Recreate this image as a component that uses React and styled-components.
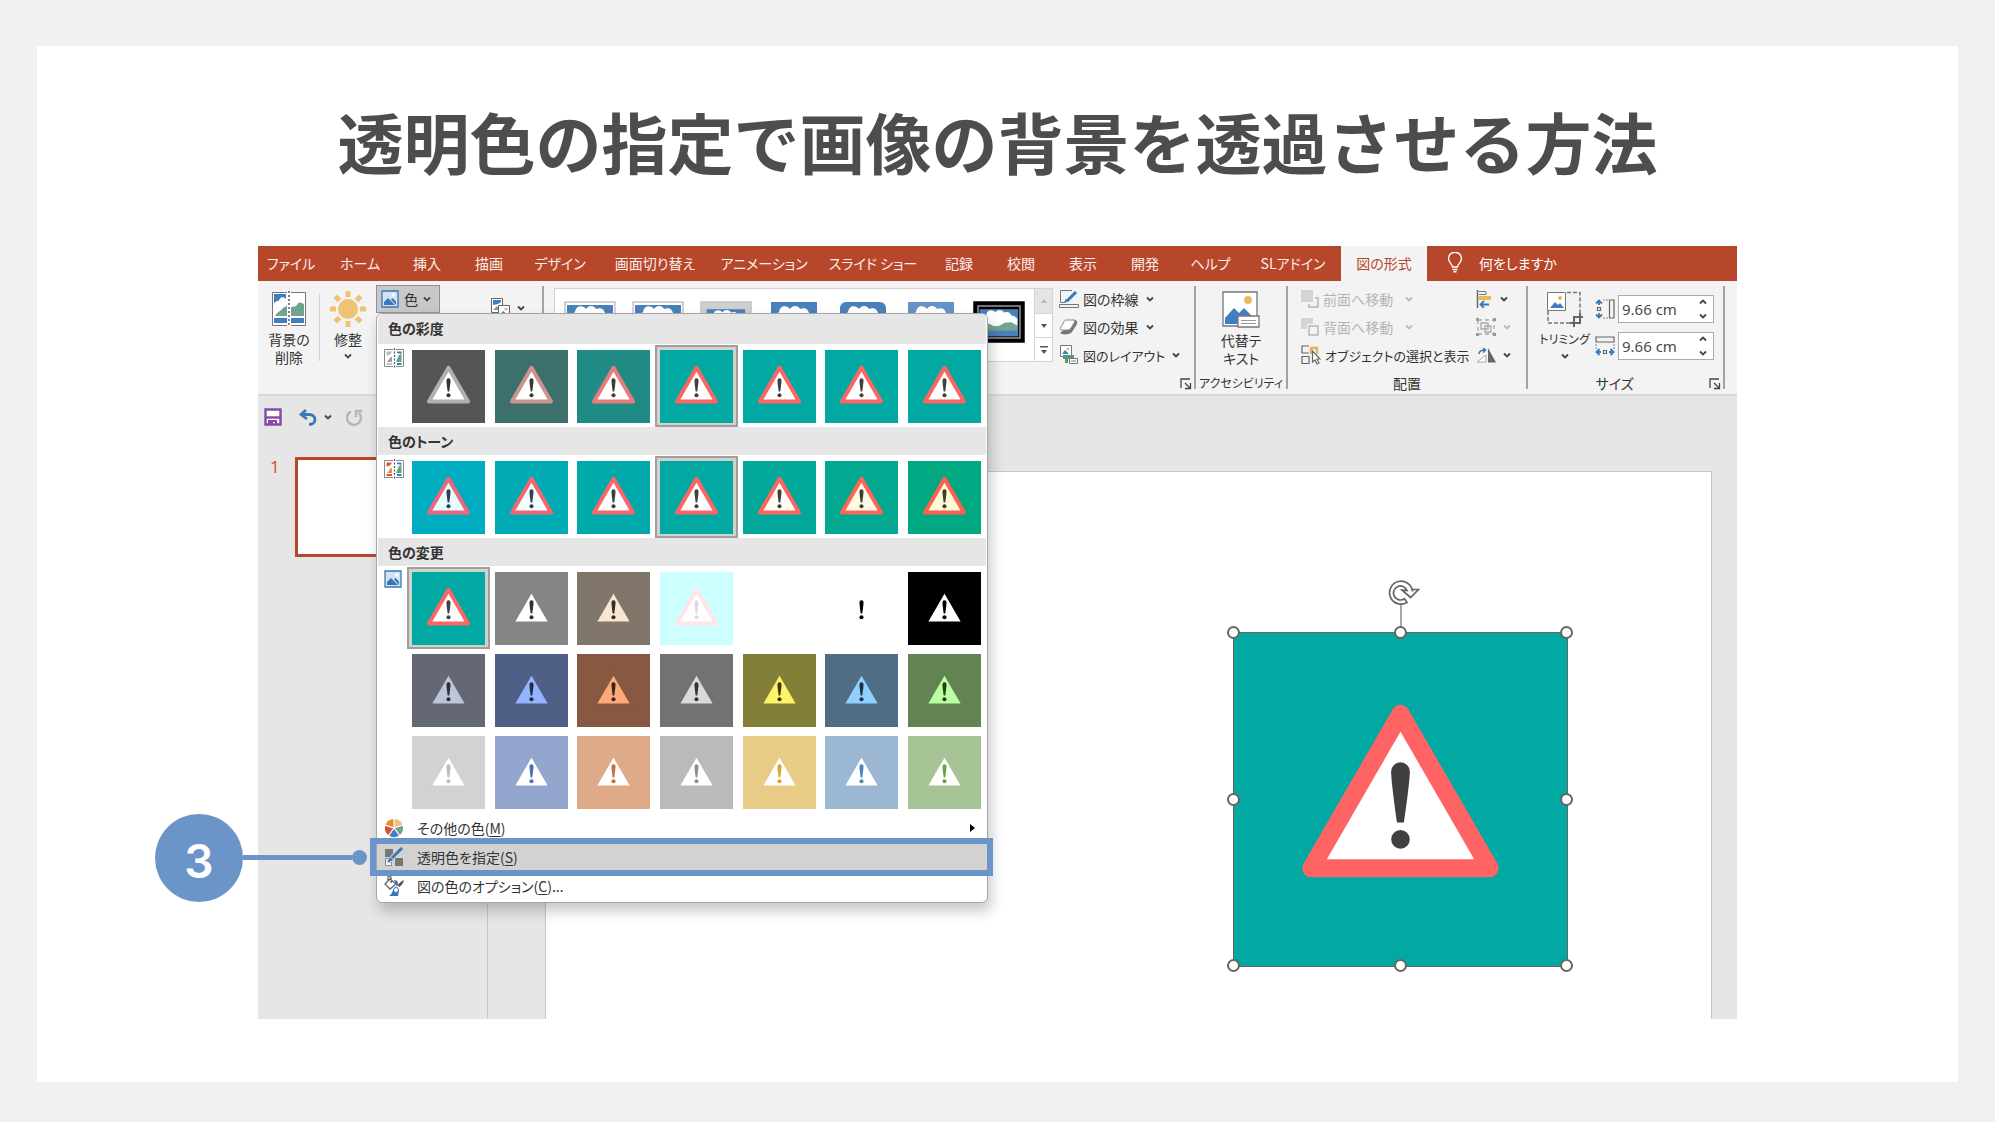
import styled, { createGlobalStyle } from 'styled-components';

const GlobalStyle = createGlobalStyle`
    * {
        box-sizing: border-box;
    }
    body {
        margin: 0;
        background-color: #f1f1f1;
        font-family: "Noto Sans CJK JP", "Noto Sans", sans-serif;
        font-feature-settings: "palt";
        color: #333;
    }
    button, input {
        font: inherit;
        font-feature-settings: inherit;
        color: inherit;
        border: 0;
        margin: 0;
        padding: 0;
        background: none;
    }
    button {
        cursor: pointer;
        white-space: nowrap;
    }
    svg {
        display: block;
        flex: none;
    }
`

const Page = styled.div`
    padding: 46px 37px 40px;
    min-height: 100vh;
`

const Card = styled.main`
    background-color: #fff;
    padding: 46px 221px 63px;
`

const Title = styled.h1`
    margin: 0 0 58px;
    font-size: 66px;
    line-height: 96px;
    font-weight: 700;
    color: #4d4d4d;
    text-align: center;
    white-space: nowrap;
    font-feature-settings: normal;
`

const Window = styled.section`
    position: relative;
    background-color: #e6e6e6;
    font-size: 14px;
`

const TabBar = styled.nav`
    display: flex;
    height: 35px;
    background-color: #b7472a;
    color: #fff;
`

const Tab = styled.button`
    width: ${(props) => props.$width}px;
    padding-bottom: 2px;
    background-color: ${(props) => (props.$active ? '#f3f3f3' : 'transparent')};
    color: ${(props) => (props.$active ? '#b7472a' : '#fbeeea')};
`

const TellMe = styled.button`
    display: flex;
    align-items: center;
    gap: 16px;
    padding: 0 0 2px 20px;
`

const Ribbon = styled.div`
    display: flex;
    height: 115px;
    background-color: #f3f3f3;
    border-bottom: 2px solid #d9d9d9;
`

const Divider = styled.span`
    flex: none;
    width: 2px;
    margin: 5px 0;
    background-color: #a3a3a3;
`

const ThinDivider = styled.span`
    width: 1px;
    height: 68px;
    margin-top: 12px;
    background-color: #d2d2d2;
`

const Group = styled.div`
    display: flex;
    flex-direction: column;
    flex: ${(props) => (props.$width ? `0 0 ${props.$width}px` : '1 1 0')};
    min-width: 0;
`

const GroupBody = styled.div`
    display: flex;
    flex: 1;
    align-items: flex-start;
    padding-left: ${(props) => props.$left || 0}px;
`

const GroupFooter = styled.div`
    position: relative;
    height: 20px;
    padding-right: ${(props) => props.$right || 0}px;
    line-height: 18px;
    font-size: ${(props) => (props.$small ? 12 : 14)}px;
    text-align: center;
    white-space: nowrap;
`

const Launcher = styled.button`
    position: absolute;
    right: 2px;
    top: 4px;
`

const BigButton = styled.button`
    display: flex;
    flex-direction: column;
    align-items: center;
    width: ${(props) => props.$width}px;
    padding-top: 10px;
    line-height: 18px;
    font-size: ${(props) => (props.$small ? 12 : 14)}px;
    svg:first-child {
        margin-bottom: 3px;
    }
`

const ChevronSlot = styled.span`
    display: flex;
    align-items: center;
    height: 18px;
`

const ColorButton = styled.button`
    display: flex;
    align-items: center;
    gap: 5px;
    width: 64px;
    height: 28px;
    margin: 4px 50px 0 0;
    padding-left: 4px;
    background-color: #c8c8c8;
    border: 1px solid #919191;
`

const ResetButton = styled.button`
    display: flex;
    align-items: center;
    gap: 6px;
    margin-top: 16px;
`

const SmallColumn = styled.div`
    display: flex;
    flex-direction: column;
    padding-top: 4px;
    width: ${(props) => props.$width}px;
`

const SmallButton = styled.button`
    display: flex;
    align-items: center;
    gap: 4px;
    height: 28px;
    font-size: ${(props) => (props.$small ? 13 : 14)}px;
    color: ${(props) => (props.disabled ? '#b5b3b5' : '#333')};
    svg:last-child:not(:first-child) {
        margin-left: ${(props) => props.$gap || 3}px;
    }
`

const Gallery = styled.div`
    display: flex;
    flex: 1;
    height: 74px;
    margin: 7px 6px 0 10px;
    background-color: #fff;
    border: 1px solid #d4d4d4;
`

const GalleryItems = styled.div`
    display: grid;
    grid-template-columns: repeat(7, 1fr);
    flex: 1;
    justify-items: center;
    padding: 12px 1px 0;
`

const GalleryScroll = styled.div`
    display: grid;
    grid-template-rows: repeat(3, 1fr);
    width: 18px;
    border-left: 1px solid #d4d4d4;
`

const ScrollButton = styled.button`
    display: flex;
    align-items: center;
    justify-content: center;
    background-color: ${(props) => (props.disabled ? '#e4e4e4' : '#fff')};
    & + & {
        border-top: 1px solid #d4d4d4;
    }
`

const SizeFields = styled.div`
    display: flex;
    flex-direction: column;
    gap: 9px;
    padding-top: 14px;
`

const SizeField = styled.label`
    display: flex;
    align-items: center;
    gap: 3px;
`

const Spinner = styled.span`
    display: flex;
    align-items: center;
    width: 96px;
    height: 28px;
    padding: 0 6px 0 3px;
    background-color: #fff;
    border: 1px solid #ababab;
`

const SizeInput = styled.input`
    flex: 1;
    min-width: 0;
    font-family: "Noto Sans", sans-serif;
    font-size: 15px;
    color: #4a4a4a;
    outline: none;
`

const SpinArrows = styled.span`
    display: flex;
    flex-direction: column;
    gap: 8px;
`

const QuickAccess = styled.div`
    display: flex;
    align-items: center;
    height: 42px;
    padding-left: 6px;
`

const QuickButton = styled.button`
    display: flex;
    align-items: center;
    gap: 7px;
    margin-right: ${(props) => props.$gap}px;
`

const Workspace = styled.div`
    display: flex;
    min-height: 581px;
`

const SlideList = styled.aside`
    display: flex;
    align-items: flex-start;
    flex: 0 0 230px;
    gap: 15px;
    padding: 19px 14px 0 12px;
    border-right: 1px solid #c6c6c6;
    font-family: "Noto Sans", sans-serif;
    font-size: 17px;
    line-height: 20px;
    color: #d35230;
`

const SlidePreview = styled.button`
    flex: 1;
    height: 100px;
    background-color: #fff;
    border: 3px solid #b7472a;
`

const Editor = styled.div`
    display: flex;
    flex: 1;
    padding: 33px 25px 0 57px;
`

const Slide = styled.div`
    position: relative;
    flex: 1;
    background-color: #fff;
    border: 1px solid #c6c6c6;
    border-bottom: 0;
`

const Picture = styled.div`
    position: absolute;
    top: 160px;
    right: 143px;
    width: 335px;
    height: 335px;
    border: 1px solid #666;
`

const Handle = styled.span`
    position: absolute;
    left: ${(props) => props.$x}%;
    top: ${(props) => props.$y}%;
    width: 13px;
    height: 13px;
    margin: -7px 0 0 -7px;
    background-color: #fff;
    border: 2px solid #666;
    border-radius: 50%;
`

const Rotator = styled.span`
    position: absolute;
    left: 50%;
    bottom: 100%;
    width: 32px;
    height: 54px;
    margin-left: -13px;
`

const Menu = styled.div`
    position: absolute;
    left: 118px;
    top: 67px;
    width: 612px;
    padding-bottom: 2px;
    background-color: #fff;
    border: 1px solid #a6a6a6;
    border-radius: 6px;
    box-shadow: 3px 8px 14px rgba(0, 0, 0, 0.22);
`

const MenuTitle = styled.h2`
    margin: 0 1px;
    padding-left: 10px;
    height: ${(props) => (props.$first ? 30 : 28)}px;
    line-height: 28px;
    font-size: 14px;
    font-weight: 700;
    background-color: #e6e6e6;
    border-radius: ${(props) => (props.$first ? '5px 5px 0 0' : 0)};
`

const MenuSection = styled.div`
    display: flex;
    padding: 1px 1px 0 7px;
`

const SectionIcon = styled.span`
    width: 23px;
    padding-top: 3px;
`

const SwatchGrid = styled.div`
    display: grid;
    grid-template-columns: repeat(7, 1fr);
    grid-auto-rows: 82px;
    flex: 1;
`

const Swatch = styled.button`
    display: flex;
    align-items: center;
    justify-content: center;
    background-color: ${(props) => (props.$selected ? '#d3d1ce' : 'transparent')};
    border: 2px solid ${(props) => (props.$selected ? '#a19f9d' : 'transparent')};
`

const MenuItem = styled.button`
    position: relative;
    z-index: ${(props) => (props.$active ? 1 : 0)};
    display: flex;
    align-items: center;
    width: 100%;
    height: 29px;
    padding: 0 12px 0 7px;
    background-color: ${(props) => (props.$active ? '#d2d2d2' : 'transparent')};
    text-align: left;
`

const MenuLabel = styled.span`
    flex: 1;
    padding-left: 13px;
    u {
        text-underline-offset: 2px;
    }
`

const Highlight = styled.span`
    position: absolute;
    top: -4px;
    bottom: -5px;
    left: -7px;
    right: -6px;
    border: 6px solid #6b95c9;
`

const Callout = styled.span`
    position: absolute;
    top: 50%;
    right: calc(100% + 10px);
    display: flex;
    align-items: center;
    width: 212px;
    height: 88px;
    margin-top: -43px;
`

const StepNumber = styled.span`
    display: flex;
    align-items: center;
    justify-content: center;
    width: 88px;
    height: 88px;
    padding-top: 6px;
    border-radius: 50%;
    background-color: #6b95c9;
    color: #fff;
    font-family: Inter, sans-serif;
    font-size: 46px;
    font-weight: 600;
`

const StepLine = styled.span`
    flex: 1;
    height: 5px;
    background-color: #6b95c9;
`

const StepDot = styled.span`
    width: 15px;
    height: 15px;
    border-radius: 50%;
    background-color: #6b95c9;
`

const tabs = [
    ['ファイル', 66],
    ['ホーム', 72],
    ['挿入', 62],
    ['描画', 62],
    ['デザイン', 80],
    ['画面切り替え', 110],
    ['アニメーション', 108],
    ['スライド ショー', 110],
    ['記録', 62],
    ['校閲', 62],
    ['表示', 62],
    ['開発', 62],
    ['ヘルプ', 69],
    ['SLアドイン', 96],
    ['図の形式', 86],
]

// background, border, inside, mark
const base = ['#02a9a2', '#ff6464', '#fff', '#404040']

const saturation = [
    ['#555', '#b0b0b0', '#fff', '#333'],
    ['#3c706d', '#cc9392', '#fff', '#383838'],
    ['#208b85', '#e67c7c', '#fff', '#3c3c3c'],
    base,
    base,
    base,
    base,
]

const tone = [
    ['#00adc0', '#ee657c', '#e6fdff', '#2c3d55'],
    ['#00abb4', '#f76472', '#f2feff', '#353f4e'],
    ['#00aaab', '#fb646b', '#fafeff', '#3c4048'],
    base,
    ['#02a89a', '#ff645f', '#fffdf5', '#40403a'],
    ['#02a88f', '#ff6456', '#fffce6', '#443f2c'],
    ['#02a882', '#ff604c', '#fffad8', '#443e20'],
]

const recolor = [
    base,
    ['#858585', '#858585', '#fff', '#333'],
    ['#80766a', '#80766a', '#f7e6d2', '#332c24'],
    ['#ccfffe', '#ffe5e5', '#fff', '#dcdcdc'],
    ['#fff', '#fff', '#fff', '#fff'],
    ['#fff', '#fff', '#fff', '#000'],
    ['#000', '#000', '#fff', '#000'],
    ['#646873', '#646873', '#bec5d8', '#2d2f35'],
    ['#505f85', '#505f85', '#96b3ff', '#242c44'],
    ['#865940', '#865940', '#ffa978', '#3a2518'],
    ['#727272', '#727272', '#dadada', '#333'],
    ['#847f38', '#847f38', '#fff168', '#383514'],
    ['#4f6e85', '#4f6e85', '#90d0ff', '#20323f'],
    ['#628453', '#628453', '#baffa0', '#283a20'],
    ['#d2d2d2', '#d2d2d2', '#fff', '#bcbcbc'],
    ['#92a6ce', '#92a6ce', '#fff', '#4a70b8'],
    ['#dfaa88', '#dfaa88', '#fff', '#c5703a'],
    ['#bababa', '#bababa', '#fff', '#909090'],
    ['#e8cc85', '#e8cc85', '#fff', '#d9a52c'],
    ['#9bb7d2', '#9bb7d2', '#fff', '#4a86bd'],
    ['#a6c495', '#a6c495', '#fff', '#70a04c'],
]

const handles = [[0, 0], [50, 0], [100, 0], [0, 50], [100, 50], [0, 100], [50, 100], [100, 100]]

function Warning({ size, colors }) {
    const [back, border, inside, mark] = colors
    return (
        <svg width={size} height={size} viewBox="0 0 334 334">
            <path fill={back} d="M0 0h334v334H0z" />
            <path fill={inside} stroke={border} strokeWidth="18" strokeLinejoin="round" d="M167 81 256.500 236H77.500z" />
            <path fill={mark} d="M157.600 139a9.400 9.400 0 0 1 18.800 0c0 8-3.400 34-5.900 51h-7c-2.500-17-5.900-43-5.900-51z" />
            <circle fill={mark} cx="167" cy="207" r="9.300" />
        </svg>
    )
}

function Chevron({ color = '#444', up }) {
    return (
        <svg width="8" height="6" viewBox="0 0 8 6" fill="none" stroke={color} strokeWidth="1.800">
            <path d={up ? 'M1 4.500 4 1.500 7 4.500' : 'M1 1.500 4 4.500 7 1.500'} />
        </svg>
    )
}

function LauncherIcon() {
    return (
        <svg width="12" height="12" viewBox="0 0 12 12" fill="none" stroke="#444" strokeWidth="1.300">
            <path d="M1 10V1h9M5 5l5 5M10.500 5v5.500H5" />
        </svg>
    )
}

function BulbIcon() {
    return (
        <svg width="16" height="21" viewBox="0 0 16 21" fill="none" stroke="#fff" strokeWidth="1.400">
            <path d="M5.500 15c0-3-4-4.500-4-8.300a6.500 6.500 0 0 1 13 0c0 3.800-4 5.300-4 8.300zM5.500 17.500h5M6.500 19.800h3" />
        </svg>
    )
}

function RemoveBackIcon() {
    return (
        <svg width="36" height="36" viewBox="0 0 36 36">
            <path fill="#fff" stroke="#777" d="M1.500 1.500h33v33h-33z" />
            <path fill="#3f7fbf" d="M3 3h12v5c-2-3-7-2-7 2-2-1-3 1-5 2zM3 27h30v5H3z" />
            <path fill="#6fa590" d="M4 25c2-4 6-5 8-8l5-3v11zM19 17c3-3 5 0 7-3 2-4 4-2 7-1v12H19z" />
            <path stroke="#fff" strokeWidth="4" d="M18 0v36" />
            <path stroke="#555" strokeWidth="1.500" strokeDasharray="2 2" d="M18 0v36" />
        </svg>
    )
}

function SunIcon() {
    return (
        <svg width="36" height="36" viewBox="0 0 36 36" fill="#eec374">
            <circle cx="18" cy="18" r="10" />
            {[0, 45, 90, 135, 180, 225, 270, 315].map((angle) => (
                <path key={angle} d="M15.500 0h5v6h-5z" transform={`rotate(${angle} 18 18)`} />
            ))}
        </svg>
    )
}

function PictureIcon() {
    return (
        <svg width="18" height="18" viewBox="0 0 18 18">
            <path fill="#d3e2f2" stroke="#3a78b5" strokeWidth="1.300" d="M1 1h16v16H1z" />
            <path fill="#3a78b5" d="M3 15v-3l4-4 7 7zM10 9.500l1.500-1.500L15 11.500V15z" />
            <circle fill="#fff" cx="12.500" cy="5" r="1.800" />
        </svg>
    )
}

function ResetIcon() {
    return (
        <svg width="21" height="22" viewBox="0 0 21 22">
            <path fill="#fff" stroke="#666" d="M1.500 1.500h11v14h-11z" />
            <path fill="#3f7fbf" d="M3 3h8v2L8 7 3 8z" />
            <path fill="#6fa590" d="m3 13 4-4 3 4z" />
            <path fill="#fff" stroke="#666" d="M8.500 8.500h11v12h-11z" />
            <path fill="#3f7fbf" d="m10 18 3-4 5 4z" />
            <circle fill="#e9b552" cx="16" cy="12" r="1.500" />
        </svg>
    )
}

function StyleThumb({ kind }) {
    const inset = kind === 'black' || kind === 'framed'
    const back = { black: '#000', framed: '#cfcfcf', plain: '#fff' }[kind]
    return (
        <svg width="52" height="42" viewBox="0 0 52 42">
            {back && <path fill={back} stroke={kind === 'black' ? '#000' : '#c4c4c4'} strokeWidth="1.500" d="M1 1h50v40H1z" />}
            {kind === 'black' && <path fill="none" stroke="#999" strokeWidth="1.500" d="M5 5h42v32H5z" />}
            <g transform={inset ? 'translate(4 5) scale(.84 .8)' : ''}>
                <rect x="3" y={back ? 4 : 1} width="46" height={back ? 34 : 37} rx={kind === 'round' ? 6 : 0} fill="#4a80bb" opacity={kind === 'soft' ? 0.85 : 1} />
                <path fill="#fff" d="M4 16c2-4 5-3 7-5 1-7 8-7 11-3 3-5 9-3 10 0 6-2 8 1 9 4 3 0 5 2 7 4v10H4z" />
                <path fill="#74a391" d="M4 28c3-5 6-3 9-6 4 1 6 4 10 3 6 1 8-6 14-4 4-2 7 2 11 3v7H4z" />
            </g>
        </svg>
    )
}

function OutlineIcon() {
    return (
        <svg width="20" height="20" viewBox="0 0 20 20" fill="none">
            <path stroke="#777" d="M13 1.500H1.500v12h5M.500 15.500h19v3H.500z" />
            <path stroke="#3a78b5" strokeWidth="3" d="m8 12 9-9" />
            <path fill="#3a78b5" d="m5 14 1.500-4 2.500 2.500z" />
        </svg>
    )
}

function EffectIcon() {
    return (
        <svg width="20" height="18" viewBox="0 0 20 18">
            <path fill="#777" d="M13 2c4-1 6 1 5 4l-5 8c-2 3-10 3-12 1l4-3z" />
            <path fill="#fff" stroke="#888" d="M7 2h7c2 0 2 1 1 3l-3 5c-1 1-2 2-3 2H3c-2 0-2-1-1-3l3-5c0-1 1-2 2-2z" />
        </svg>
    )
}

function LayoutIcon() {
    return (
        <svg width="20" height="20" viewBox="0 0 20 20">
            <path fill="#fff" stroke="#777" d="M1.500.500h11v11h-11z" />
            <path fill="#3f7fbf" d="m3 9 3-4 4 4z" />
            <circle fill="#e9b552" cx="9" cy="4" r="1.300" />
            <path fill="#4e9a78" d="M4 10h11v4H9v4H6v-4H4z" />
            <path fill="#fff" stroke="#777" d="M10.500 13.500h8v5h-8z" />
            <path stroke="#777" d="M12 16h5" />
        </svg>
    )
}

function AltTextIcon() {
    return (
        <svg width="38" height="37" viewBox="0 0 38 37">
            <path fill="#fff" stroke="#777" strokeWidth="1.300" d="M1 1h34v34H1z" />
            <path fill="#3f7fbf" d="M3 33V27l9-10 5 5 5-5 11 11v5z" />
            <circle fill="#edb85c" cx="26" cy="9" r="4" />
            <path fill="#fff" stroke="#777" strokeWidth="1.300" d="M16 25h21v11H16z" />
            <path stroke="#999" d="M19 29.500h15M19 32.500h15" />
        </svg>
    )
}

function ForwardIcon({ back }) {
    return (
        <svg width="18" height="18" viewBox="0 0 18 18">
            <path fill="#d6d2d6" d={back ? 'M0 0h12v6H6v5H0z' : 'M0 0h12v12H0z'} />
            <path fill="none" stroke="#b9b5b9" strokeWidth="1.500" d={back ? 'M8 8h9v9H8z' : 'M14 8h3v9H8v-3'} />
        </svg>
    )
}

function SelectIcon() {
    return (
        <svg width="20" height="20" viewBox="0 0 20 20" fill="none" stroke="#666" strokeWidth="1.200">
            <path d="M8 1H1v7h7M1 11.500h7v7H1z" />
            <path stroke="#eab060" strokeWidth="2.400" d="M9 3h7v6M10 3v6" />
            <path fill="#fff" d="m11.500 6 0 11 2.500-2 2 4 2-1-2-4h3z" />
        </svg>
    )
}

function AlignIcon() {
    return (
        <svg width="17" height="18" viewBox="0 0 17 18">
            <path stroke="#666" strokeWidth="1.500" d="M1.500 0v18" />
            <path fill="none" stroke="#777" d="M3 1.500h7v3H3" />
            <path fill="#edb85c" d="M3 6h12v4H3z" />
            <path fill="none" stroke="#3a78b5" strokeWidth="1.800" d="M13 14.500H5M8 11l-3.500 3.500L8 18" />
        </svg>
    )
}

function GroupIcon() {
    return (
        <svg width="20" height="18" viewBox="0 0 20 18" fill="none" stroke="#aaa" strokeWidth="1.300">
            <path d="M2 2h16v14H2z" strokeDasharray="4 3" />
            <path d="M5 5h7v6H5zM9 8h6v6H9z" />
            <path fill="#999" stroke="none" d="M0 0h3v3H0zM17 0h3v3h-3zM0 15h3v3H0zM17 15h3v3h-3z" />
        </svg>
    )
}

function RotateIcon() {
    return (
        <svg width="20" height="15" viewBox="0 0 20 15">
            <path fill="#fff" stroke="#aaa" d="M1 14h9V7z" />
            <path fill="#666" d="M12 0v14.500h8z" />
            <path fill="none" stroke="#3a78b5" strokeWidth="1.500" d="M3 6c0-3 2-4 6-4M7 0l2.500 2L7 4.500" />
        </svg>
    )
}

function CropIcon() {
    return (
        <svg width="36" height="36" viewBox="0 0 36 36" fill="none">
            <path stroke="#777" strokeWidth="1.500" strokeDasharray="4 2" d="M20 1.500h13V23M1 20v12h22" />
            <path fill="#fff" stroke="#777" d="M.500 1.500h18v18H.500z" />
            <path fill="#3f7fbf" d="m3 17 5-6 3 3 2-2 4 5z" />
            <circle fill="#edb85c" cx="13" cy="7" r="2" />
            <path stroke="#666" strokeWidth="2" d="M27 36V26h9M23 32h10V22" />
        </svg>
    )
}

function HeightIcon() {
    return (
        <svg width="20" height="20" viewBox="0 0 20 20" fill="none">
            <path stroke="#888" strokeDasharray="2 1" d="M8 1h6M8 19h6" />
            <path stroke="#666" strokeWidth="1.200" d="M14.500 1h4.500v18h-4.500zM2.500 8.500h3v3h-3z" />
            <path stroke="#3a78b5" strokeWidth="1.800" d="M1 4.500 4 1.500 7 4.500M4 2v4M1 15.500 4 18.500 7 15.500M4 18v-4" />
        </svg>
    )
}

function WidthIcon() {
    return (
        <svg width="20" height="20" viewBox="0 0 20 20" fill="none">
            <path stroke="#888" strokeDasharray="2 1" d="M1 8v5M19 8v5" />
            <path stroke="#666" strokeWidth="1.200" d="M1 1h18v5H1zM8.500 14.500h3v3h-3z" />
            <path stroke="#3a78b5" strokeWidth="1.800" d="M4.500 13 1.500 16 4.500 19M2 16h4M15.500 13 18.500 16 15.500 19M18 16h-4" />
        </svg>
    )
}

function SaveIcon() {
    return (
        <svg width="18" height="18" viewBox="0 0 18 18" fill="none" stroke="#8749a8">
            <path strokeWidth="2.400" fill="#fff" d="M1.500 1.500h15v15h-15z" />
            <path strokeWidth="2.400" d="M2 9.500h14" />
            <path fill="#8749a8" stroke="none" d="M4 12h9v5h-2v-3H9v3H4z" />
        </svg>
    )
}

function UndoIcon() {
    return (
        <svg width="18" height="17" viewBox="0 0 18 17" fill="none" stroke="#3a78b5" strokeWidth="2.800">
            <path d="M7 1 2 5.500 8 10M2 5.500h8c8 0 8 10 0 10" />
        </svg>
    )
}

function RedoIcon() {
    return (
        <svg width="17" height="17" viewBox="0 0 17 17" fill="none" stroke="#b5b5b5" strokeWidth="2.400">
            <path d="M5 2.500a7 7 0 1 0 8 1.500M10 8V2h6" />
        </svg>
    )
}

function AdjustIcon({ warm }) {
    const left = warm ? ['#e0502c', '#ef8c3c', '#e0502c'] : ['#b5b5b5', '#999', '#c4c4c4']
    return (
        <svg width="20" height="20" viewBox="0 0 20 20">
            <path fill="#fff" stroke="#888" d="M.500 1.500h19v17H.500z" />
            <path fill={left[0]} d="M2.500 3.500H8l-2 3-3.500 1z" />
            <path fill={left[1]} d="m3 14 4-5h1v5z" />
            <path fill={left[2]} d="M2.500 15H8v2H2.500z" />
            <path fill="#3f7fbf" d="M13 3.500h4.500V6L13 5zM13 15h4.500v2H13z" />
            <path fill="#5ea286" d="m12 14 3-7 2.500-1v8z" />
            <path stroke="#fff" strokeWidth="3" d="M10.500 0v20" />
            <path stroke="#555" strokeWidth="1.200" strokeDasharray="2 1.500" d="M10.500 0v20" />
        </svg>
    )
}

function WheelIcon() {
    const slices = ['#edc07a', '#6fa590', '#3f7fbf', '#d5533a', '#e88a3f']
    return (
        <svg width="20" height="20" viewBox="0 0 20 20">
            {slices.map((color, i) => (
                <path key={color} fill={color} stroke="#fff" d="M10 10V.500a9.500 9.500 0 0 1 9.030 6.560z" transform={`rotate(${i * 72} 10 10)`} />
            ))}
        </svg>
    )
}

function TransparentIcon() {
    return (
        <svg width="20" height="20" viewBox="0 0 20 20">
            <path fill="#777" d="M1 2h8v8H1zM11 11h8v8h-8z" />
            <path fill="#fff" stroke="#888" d="M1.500 11.500h6v7h-6z" />
            <path stroke="#d2d2d2" strokeWidth="5" d="M4 15 18 1" />
            <path stroke="#3a78b5" strokeWidth="3" d="M8 11 18 1" />
            <path fill="#3a78b5" d="m3 16 3-6 3 3z" />
        </svg>
    )
}

function OptionsIcon() {
    return (
        <svg width="20" height="20" viewBox="0 0 20 20">
            <path fill="#fff" stroke="#666" strokeWidth="1.300" d="m1 8 5-5 6 5-6 5zM4 6V1.500a1.500 1.500 0 0 1 3 0V7" />
            <path fill="#3a78b5" d="M10 4c4 0 5 3 3 6l-4 4c-1 3-2 5-4 6h9l1-5z" />
            <path fill="#555" d="M20 4c-1 4-3 6-5 7l-2-2c2-1 4-4 7-5z" />
            <circle cx="12" cy="14" r="2.500" fill="#fff" stroke="#3a78b5" />
        </svg>
    )
}

function RotateHandle() {
    return (
        <svg width="32" height="54" viewBox="0 0 32 54" fill="none">
            <path stroke="#8a8a8a" strokeWidth="1.500" d="M13 26v28" />
            <path stroke="#666" strokeWidth="1.700" fill="#fff" d="M24.500 12.500a11.500 11.500 0 1 0-5.500 11l-2.500-3.800a7 7 0 1 1 2.500-8.200l-5-.500 8.500 7.500 8-8h-6z" />
        </svg>
    )
}

function Swatches({ items, selected, name }) {
    return (
        <SwatchGrid>
            {items.map((colors, i) => (
                <Swatch key={i} $selected={i === selected} aria-label={`${name} ${i + 1}`}>
                    <Warning size={73} colors={colors} />
                </Swatch>
            ))}
        </SwatchGrid>
    )
}

function ColorMenu() {
    return (
        <Menu>
            <MenuTitle $first>色の彩度</MenuTitle>
            <MenuSection>
                <SectionIcon><AdjustIcon/></SectionIcon>
                <Swatches items={saturation} selected={3} name="色の彩度" />
            </MenuSection>
            <MenuTitle>色のトーン</MenuTitle>
            <MenuSection>
                <SectionIcon><AdjustIcon warm/></SectionIcon>
                <Swatches items={tone} selected={3} name="色のトーン" />
            </MenuSection>
            <MenuTitle>色の変更</MenuTitle>
            <MenuSection>
                <SectionIcon><PictureIcon/></SectionIcon>
                <Swatches items={recolor} selected={0} name="色の変更" />
            </MenuSection>
            <MenuItem>
                <WheelIcon/>
                <MenuLabel>その他の色(<u>M</u>)</MenuLabel>
                <svg width="5" height="8" viewBox="0 0 5 8"><path d="m0 0 5 4-5 4z" /></svg>
            </MenuItem>
            <MenuItem $active>
                <TransparentIcon/>
                <MenuLabel>透明色を指定(<u>S</u>)</MenuLabel>
                <Highlight/>
                <Callout>
                    <StepNumber>3</StepNumber>
                    <StepLine/>
                    <StepDot/>
                </Callout>
            </MenuItem>
            <MenuItem>
                <OptionsIcon/>
                <MenuLabel>図の色のオプション(<u>C</u>)...</MenuLabel>
            </MenuItem>
        </Menu>
    )
}

function SizeRow({ icon, name }) {
    return (
        <SizeField>
            {icon}
            <Spinner>
                <SizeInput aria-label={name} defaultValue="9.66 cm" />
                <SpinArrows><Chevron up/><Chevron/></SpinArrows>
            </Spinner>
        </SizeField>
    )
}

function PictureRibbon() {
    return (
        <Ribbon>
            <Group $width={284}>
                <GroupBody $left={1}>
                    <BigButton $width={60}><RemoveBackIcon/>背景の<br/>削除</BigButton>
                    <ThinDivider/>
                    <BigButton $width={56}><SunIcon/>修整<ChevronSlot><Chevron/></ChevronSlot></BigButton>
                    <ColorButton><PictureIcon/>色<Chevron/></ColorButton>
                    <ResetButton aria-label="図のリセット"><ResetIcon/><Chevron/></ResetButton>
                </GroupBody>
            </Group>
            <Divider/>
            <Group>
                <GroupBody>
                    <Gallery>
                        <GalleryItems>
                            <StyleThumb kind="plain" />
                            <StyleThumb kind="plain" />
                            <StyleThumb kind="framed" />
                            <StyleThumb kind="shadow" />
                            <StyleThumb kind="round" />
                            <StyleThumb kind="soft" />
                            <StyleThumb kind="black" />
                        </GalleryItems>
                        <GalleryScroll>
                            <ScrollButton disabled aria-label="上へ">
                                <svg width="6" height="4" viewBox="0 0 6 4" fill="#b5b5b5"><path d="m0 4 3-4 3 4z" /></svg>
                            </ScrollButton>
                            <ScrollButton aria-label="下へ">
                                <svg width="6" height="4" viewBox="0 0 6 4" fill="#555"><path d="m0 0 3 4 3-4z" /></svg>
                            </ScrollButton>
                            <ScrollButton aria-label="その他">
                                <svg width="8" height="8" viewBox="0 0 8 8" fill="#555"><path d="M0 0h8v1.500H0zM1 4l3 4 3-4z" /></svg>
                            </ScrollButton>
                        </GalleryScroll>
                    </Gallery>
                    <SmallColumn $width={135}>
                        <SmallButton><OutlineIcon/>図の枠線<Chevron/></SmallButton>
                        <SmallButton><EffectIcon/>図の効果<Chevron/></SmallButton>
                        <SmallButton $small><LayoutIcon/>図のレイアウト<Chevron/></SmallButton>
                    </SmallColumn>
                </GroupBody>
                <GroupFooter><Launcher aria-label="図のスタイル"><LauncherIcon/></Launcher></GroupFooter>
            </Group>
            <Divider/>
            <Group $width={90}>
                <GroupBody>
                    <BigButton $width={90}><AltTextIcon/>代替テ<br/>キスト</BigButton>
                </GroupBody>
                <GroupFooter $small>アクセシビリティ</GroupFooter>
            </Group>
            <Divider/>
            <Group $width={238}>
                <GroupBody $left={13}>
                    <SmallColumn $width={175}>
                        <SmallButton disabled $gap={8}><ForwardIcon/>前面へ移動<Chevron color="#bbb" /></SmallButton>
                        <SmallButton disabled $gap={8}><ForwardIcon back/>背面へ移動<Chevron color="#bbb" /></SmallButton>
                        <SmallButton $small><SelectIcon/>オブジェクトの選択と表示</SmallButton>
                    </SmallColumn>
                    <SmallColumn $width={40}>
                        <SmallButton aria-label="配置"><AlignIcon/><Chevron/></SmallButton>
                        <SmallButton disabled aria-label="グループ化"><GroupIcon/><Chevron color="#bbb" /></SmallButton>
                        <SmallButton aria-label="回転"><RotateIcon/><Chevron/></SmallButton>
                    </SmallColumn>
                </GroupBody>
                <GroupFooter>配置</GroupFooter>
            </Group>
            <Divider/>
            <Group $width={195}>
                <GroupBody $left={6}>
                    <BigButton $width={61} $small><CropIcon/>トリミング<ChevronSlot><Chevron/></ChevronSlot></BigButton>
                    <SizeFields>
                        <SizeRow icon={<HeightIcon/>} name="高さ" />
                        <SizeRow icon={<WidthIcon/>} name="幅" />
                    </SizeFields>
                </GroupBody>
                <GroupFooter $right={22}>サイズ<Launcher aria-label="配置とサイズ"><LauncherIcon/></Launcher></GroupFooter>
            </Group>
            <Divider/>
            <Group $width={12}/>
        </Ribbon>
    )
}

export default function App(){
    return(
        <Page>
            <GlobalStyle/>
            <Card>
                <Title>透明色の指定で画像の背景を透過させる方法</Title>
                <Window>
                    <TabBar>
                        {tabs.map(([label, width]) => (
                            <Tab key={label} $width={width} $active={label === '図の形式'}>{label}</Tab>
                        ))}
                        <TellMe><BulbIcon/>何をしますか</TellMe>
                    </TabBar>
                    <PictureRibbon/>
                    <QuickAccess>
                        <QuickButton $gap={17} aria-label="保存"><SaveIcon/></QuickButton>
                        <QuickButton $gap={14} aria-label="元に戻す"><UndoIcon/><Chevron/></QuickButton>
                        <QuickButton $gap={0} aria-label="やり直し"><RedoIcon/></QuickButton>
                    </QuickAccess>
                    <Workspace>
                        <SlideList>
                            1
                            <SlidePreview aria-label="スライド 1" />
                        </SlideList>
                        <Editor>
                            <Slide>
                                <Picture>
                                    <Warning size={333} colors={base} />
                                    <Rotator><RotateHandle/></Rotator>
                                    {handles.map(([x, y]) => (
                                        <Handle key={`${x}-${y}`} $x={x} $y={y} />
                                    ))}
                                </Picture>
                            </Slide>
                        </Editor>
                    </Workspace>
                    <ColorMenu/>
                </Window>
            </Card>
        </Page>
    )
}
